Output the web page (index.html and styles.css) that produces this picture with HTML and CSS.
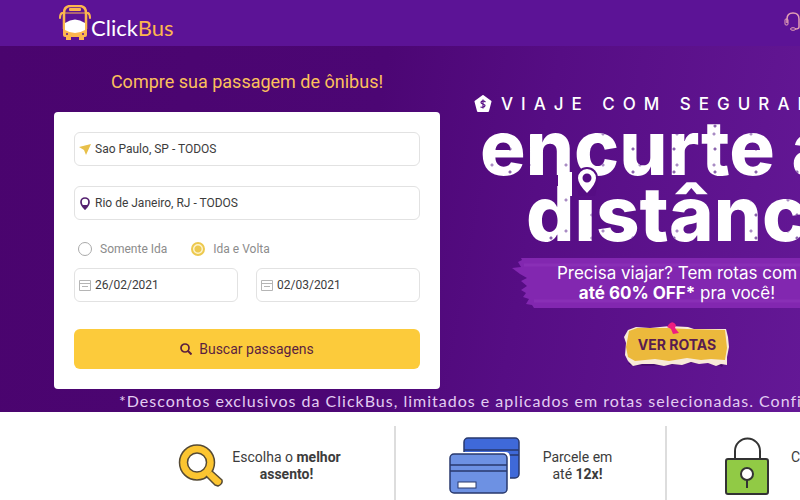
FILE: index.html
```html
<!DOCTYPE html>
<html lang="pt-BR">
<head>
    <meta charset="UTF-8">
    <meta name="viewport" content="width=device-width, initial-scale=1.0">
    <title>ClickBus</title>
    <link rel="stylesheet" href="styles.css">
</head>
<body>
    <header class="header">
        <a href="#" class="logo">
            <svg width="32" height="36" viewBox="0 0 32 36">
                <path d="M5 24V8q0-7 7-7h8q7 0 7 7v16" fill="none" stroke="#fcb64e" stroke-width="2.5"/>
                <path d="M5 8H3q-2 1-2 5M27 8h2q2 1 2 5" fill="none" stroke="#fcb64e" stroke-width="2" stroke-linecap="round" stroke-linejoin="round"/>
                <path d="M4 23h24v7q0 2-2 2h-1v3h-5v-3h-8v3H7v-3H6q-2 0-2-2z" fill="#fcb64e"/>
                <rect x="10" y="3" width="12" height="3" rx="1" fill="#fcb64e"/>
                <path d="M6 8h20" stroke="#fcb64e" stroke-width="1"/>
                <path d="M6 18q10-7 20 0v7q-10 6-20 0z" fill="#fff"/>
                <circle cx="8" cy="29" r="1" fill="#5c1396"/>
                <circle cx="24" cy="29" r="1" fill="#5c1396"/>
            </svg>
            <span>Click<span class="logo-bus">Bus</span></span>
        </a>
        <a href="#" class="help" aria-label="Ajuda">
            <svg width="16" height="20" viewBox="0 0 16 20">
                <path d="M3 12V8q0-6 6-6t6 6v8q0 2-4 2" fill="none" stroke="#e3a1b4" stroke-width="1.5"/>
                <rect x="1" y="8" width="3" height="6" rx="1" fill="none" stroke="#e3a1b4"/>
                <ellipse cx="9" cy="18" rx="2.5" ry="1.3" fill="none" stroke="#e3a1b4"/>
            </svg>
        </a>
    </header>

    <section class="hero">
        <div class="hero-content">
            <div class="search">
                <h1 class="search-title">Compre sua passagem de ônibus!</h1>
                <form class="card">
                    <label class="field">
                        <svg width="12" height="12" viewBox="0 0 12 12"><path d="M0 4L12 1 7 12 5 7z" fill="#e8c04a"/></svg>
                        <input type="text" value="Sao Paulo, SP - TODOS" aria-label="Origem">
                    </label>
                    <label class="field">
                        <svg width="12" height="14" viewBox="0 0 12 14"><path d="M6 2a4 4 0 0 1 4 4q0 3-4 7-4-4-4-7a4 4 0 0 1 4-4z" fill="none" stroke="#54206f" stroke-width="1.700"/><path d="M3 9h6l-3 4z" fill="#54206f"/></svg>
                        <input type="text" value="Rio de Janeiro, RJ - TODOS" aria-label="Destino">
                    </label>
                    <div class="trip">
                        <label><input type="radio" name="trip"> Somente Ida</label>
                        <label><input type="radio" name="trip" checked> Ida e Volta</label>
                    </div>
                    <div class="dates">
                        <label class="field">
                            <svg width="12" height="12" viewBox="0 0 12 12"><path d="M.5 1.500h11v10H.5zM.5 4.500h11M3 7.500h6" fill="none" stroke="#b5b5b5"/></svg>
                            <input type="text" value="26/02/2021" aria-label="Data de ida">
                        </label>
                        <label class="field">
                            <svg width="12" height="12" viewBox="0 0 12 12"><path d="M.5 1.500h11v10H.5zM.5 4.500h11M3 7.500h6" fill="none" stroke="#b5b5b5"/></svg>
                            <input type="text" value="02/03/2021" aria-label="Data de volta">
                        </label>
                    </div>
                    <button type="submit" class="search-button">
                        <svg width="12" height="12" viewBox="0 0 12 12"><circle cx="5" cy="5" r="4" fill="none" stroke="#5b1f3f" stroke-width="1.700"/><path d="M8 8l3.500 3.500" stroke="#5b1f3f" stroke-width="2"/></svg>
                        Buscar passagens
                    </button>
                </form>
            </div>

            <div class="promo">
                <p class="eyebrow">
                    <svg width="18" height="18" viewBox="0 0 18 18"><path d="M9 1l7.500 5.500L14 16H4L1.500 6.500z" fill="#fff" stroke="#fff" stroke-width="2" stroke-linejoin="round"/><path d="M11.500 7Q9 5 7.500 6.500t1.500 2.500 1.500 2.500-4 .5M9 4.500v9" fill="none" stroke="#5b1588" stroke-width="1.200"/></svg>
                    VIAJE COM SEGURANÇA
                </p>
                <h2 class="headline">
                    <span class="line">encurte a</span>
                    <span class="line line-second">distância</span>
                    <svg class="headline-pin" width="24" height="30" viewBox="0 0 24 30"><path d="M12 1a11 11 0 0 1 11 11q0 6-3 18H4Q1 18 1 12A11 11 0 0 1 12 1z" fill="#560d84"/><path d="M12 3a9 9 0 0 1 9 9q0 6-9 15-9-9-9-15a9 9 0 0 1 9-9zM12 7.500a4.500 4.500 0 1 0 0 9 4.500 4.500 0 0 0 0-9z" fill="#fff" fill-rule="evenodd"/></svg>
                </h2>
                <div class="brush">
                    <svg class="brush-paint" height="52" width="420" viewBox="0 0 420 52" preserveAspectRatio="none"><path d="M9 1H420V51H22l-2-3-6-1 3-5-6-2 3-4-5-3 6-4-6-5 6-3-7-4-8-6 9-1-3-5 4-2z" fill="#8227b0"/><path d="M12 8h408M22 44h398" stroke="#892fb6" stroke-width="3"/></svg>
                    <p>Precisa viajar? Tem rotas com<br><strong>até 60% OFF*</strong> pra você!</p>
                </div>
                <a href="#" class="routes">
                    <svg class="routes-paper" width="106" height="48" viewBox="0 0 106 48">
                        <path d="M4 42q50-4 98-2l-4 6q-10-6-30-4-40 4-62 2z" fill="#3c0760" opacity=".7"/>
                        <path d="M4 9l8-3 14 1 20-2 18 1 6 2 32 0 2 8 1 10-2 10 0 8-6-1-5 2-8-3-9 1-8-2-9 3-10-1-8 2-10-2-12 0-9 2-5-5-3-6 1-12-2-6z" fill="#f8ead9"/>
                        <path d="M5 10l8-3 30 0 20 1 38 1 1 9 1 9-2 12-14-1-10 1-14-2-18 3-14-2-20 2-7-4-2-10z" fill="#ecb93c"/>
                        <path d="M45 3q4-4 7 1l-1 3 4 5-6 1-2-5-4-2z" fill="#ee1d80"/>
                    </svg>
                    <span>VER ROTAS</span>
                </a>
            </div>
        </div>
        <p class="note">*Descontos exclusivos da ClickBus, limitados e aplicados em rotas selecionadas. Confira</p>
    </section>

    <section class="features">
        <div class="feature feature-seat">
            <svg width="46" height="46" viewBox="0 0 46 46"><path d="M19 2a17.500 17.500 0 1 1 0 35A17.500 17.500 0 0 1 19 2zM19 10a9.500 9.500 0 1 0 0 19 9.500 9.500 0 0 0 0-19z" fill="#fcc531" fill-rule="evenodd" stroke="#554a35" stroke-width="1.500"/><path d="M34 28l10 9q1 4-4 6l-3-1-9-9" fill="#fcc531" stroke="#554a35" stroke-width="1.500" stroke-linejoin="round"/></svg>
            <p>Escolha o <strong>melhor<br>assento!</strong></p>
        </div>
        <div class="feature">
            <svg width="72" height="58" viewBox="0 0 72 58"><rect x="15" y="1" width="55" height="40" rx="4" fill="#3f69d9" stroke="#29396d" stroke-width="1.500"/><path d="M15 13h55M15 18h55" stroke="#29396d" stroke-width="1.500"/><path d="M0 15h56q5 0 5 5v24H0z" fill="#fff"/><rect x="1" y="17" width="57" height="39" rx="4" fill="#6d91e3" stroke="#29396d" stroke-width="1.500"/><path d="M1 28h57M1 34h57" stroke="#29396d" stroke-width="1.500"/><rect x="9" y="45" width="18" height="6" fill="#fff" stroke="#29396d"/></svg>
            <p>Parcele em<br>até <strong>12x!</strong></p>
        </div>
        <div class="feature">
            <svg width="44" height="58" viewBox="0 0 44 58"><path d="M10 22V14a12 12 0 0 1 25 0v8" fill="none" stroke="#333" stroke-width="2"/><rect x="1" y="22" width="42" height="35" rx="2" fill="#91ca45" stroke="#333" stroke-width="2"/><circle cx="22" cy="37" r="6" fill="#fff" stroke="#333" stroke-width="2"/><path d="M22 43v8" stroke="#333" stroke-width="2"/></svg>
            <p>Compra <strong>100%<br>segura!</strong></p>
        </div>
    </section>
</body>
</html>
```
FILE: styles.css
```css
*{
    margin: 0;
    padding: 0;
    box-sizing: border-box;
}
body {
    min-height: 100vh;
    display: flex;
    flex-direction: column;
    overflow-x: hidden;
    font-family: Roboto, sans-serif;
    background: #fff;
}
a {
    text-decoration: none;
}

.header {
    height: 46px;
    padding-left: 59px;
    display: flex;
    justify-content: space-between;
    align-items: flex-start;
    background: #5c1396;
}
.logo {
    display: flex;
    align-items: center;
    color: #fff;
    font-family: Lato, sans-serif;
    font-size: 22px;
    line-height: 36px;
}
.logo > span {
    padding-top: 10px;
}
.logo-bus {
    color: #fcb64e;
}
.help {
    padding-top: 11px;
}

.hero {
    overflow: hidden;
    background: linear-gradient(100deg, #4a046e 0%, #4c0674 45%, #560d84 65%, #641896 100%);
}
.hero-content {
    display: grid;
    grid-template-columns: 386px 1fr;
    gap: 34px;
    padding: 24px 0 0 54px;
}
.search-title {
    margin-bottom: 18px;
    text-align: center;
    font-size: 18px;
    font-weight: 400;
    line-height: 24px;
    color: #fcc05c;
}
.card {
    padding: 20px;
    border-radius: 4px;
    background: #fff;
}
.field {
    display: flex;
    align-items: center;
    gap: 4px;
    height: 34px;
    padding: 0 4px;
    margin-bottom: 20px;
    border: 1px solid #e2e2e2;
    border-radius: 6px;
}
.field svg {
    flex: none;
}
.field input {
    width: 100%;
    border: none;
    outline: none;
    background: none;
    font-family: Roboto, sans-serif;
    font-size: 12px;
    color: #3c3c3c;
}
.trip {
    display: flex;
    gap: 24px;
    padding-left: 4px;
    height: 18px;
    margin-bottom: 10px;
}
.trip label {
    display: flex;
    align-items: center;
    gap: 8px;
    font-size: 12px;
    color: #8c8c8c;
}
.trip input {
    appearance: none;
    width: 14px;
    height: 14px;
    border: 1px solid #aaa;
    border-radius: 50%;
}
.trip input:checked {
    border: 2px solid #edc94f;
    background: radial-gradient(circle, #edc94f 3px, #fdf3cd 4px);
}
.dates {
    display: grid;
    grid-template-columns: 1fr 1fr;
    gap: 18px;
    margin-bottom: 7px;
}
.search-button {
    display: flex;
    align-items: center;
    justify-content: center;
    gap: 7px;
    width: 100%;
    height: 40px;
    border: none;
    border-radius: 6px;
    background: #fccb3b;
    color: #5b1f3f;
    font-family: Roboto, sans-serif;
    font-size: 14px;
    cursor: pointer;
}

.promo {
    width: 406px;
    padding-top: 24px;
    font-family: Inter, sans-serif;
    color: #fff;
}
.eyebrow {
    display: flex;
    align-items: center;
    gap: 9px;
    font-size: 17px;
    line-height: 20px;
    font-weight: 500;
    letter-spacing: 8px;
    white-space: nowrap;
}
.eyebrow svg {
    flex: none;
}
.headline {
    position: relative;
    padding-left: 6px;
    font-size: 76px;
    line-height: 66px;
    font-weight: 800;
    white-space: nowrap;
}
/* worn print: small purple specks inside the letters */
.line {
    display: block;
    color: transparent;
    background:
        radial-gradient(circle at 12px 20px, #a98cc4 1px, transparent 2px) 0 0 / 37px 31px,
        radial-gradient(circle at 30px 12px, #8a63ad 1px, transparent 2px) 0 0 / 41px 23px,
        #fff;
    -webkit-background-clip: text;
    background-clip: text;
}
.line-second {
    padding-left: 46px;
}
/* stem that joins the n to the d below it */
.headline::after {
    content: "";
    position: absolute;
    left: 84px;
    top: 58px;
    width: 14px;
    height: 24px;
    background: #fff;
}
.headline-pin {
    position: absolute;
    left: 101px;
    top: 52px;
}
.brush {
    position: relative;
    height: 52px;
    margin-top: 11px;
    display: flex;
    align-items: center;
    justify-content: center;
    text-align: center;
    font-size: 17px;
    line-height: 20px;
    white-space: nowrap;
}
.brush-paint {
    position: absolute;
    left: 38px;
    top: 0;
}
.brush p {
    position: relative;
}
.routes {
    position: relative;
    display: block;
    width: 106px;
    height: 48px;
    margin: 12px auto 0;
    text-align: center;
    font-size: 14px;
    font-weight: 700;
    line-height: 48px;
    color: #581c50;
}
.routes-paper {
    position: absolute;
    left: 0;
    top: 0;
}
.routes span {
    position: relative;
}
.note {
    padding-left: 119px;
    font-family: Lato, sans-serif;
    font-size: 16px;
    line-height: 23px;
    letter-spacing: 1px;
    white-space: nowrap;
    color: #e3cdf2;
}

.features {
    flex: 1;
    display: grid;
    grid-template-columns: repeat(3, 271px);
    padding: 14px 0 0 125px;
    overflow: hidden;
}
.feature {
    display: flex;
    align-items: center;
    justify-content: center;
    gap: 22px;
    min-height: 80px;
    border-right: 2px solid #ddd;
    font-size: 14px;
    line-height: 17px;
    text-align: center;
    color: #3c3c3c;
}
.feature-seat {
    gap: 8px;
}
```
